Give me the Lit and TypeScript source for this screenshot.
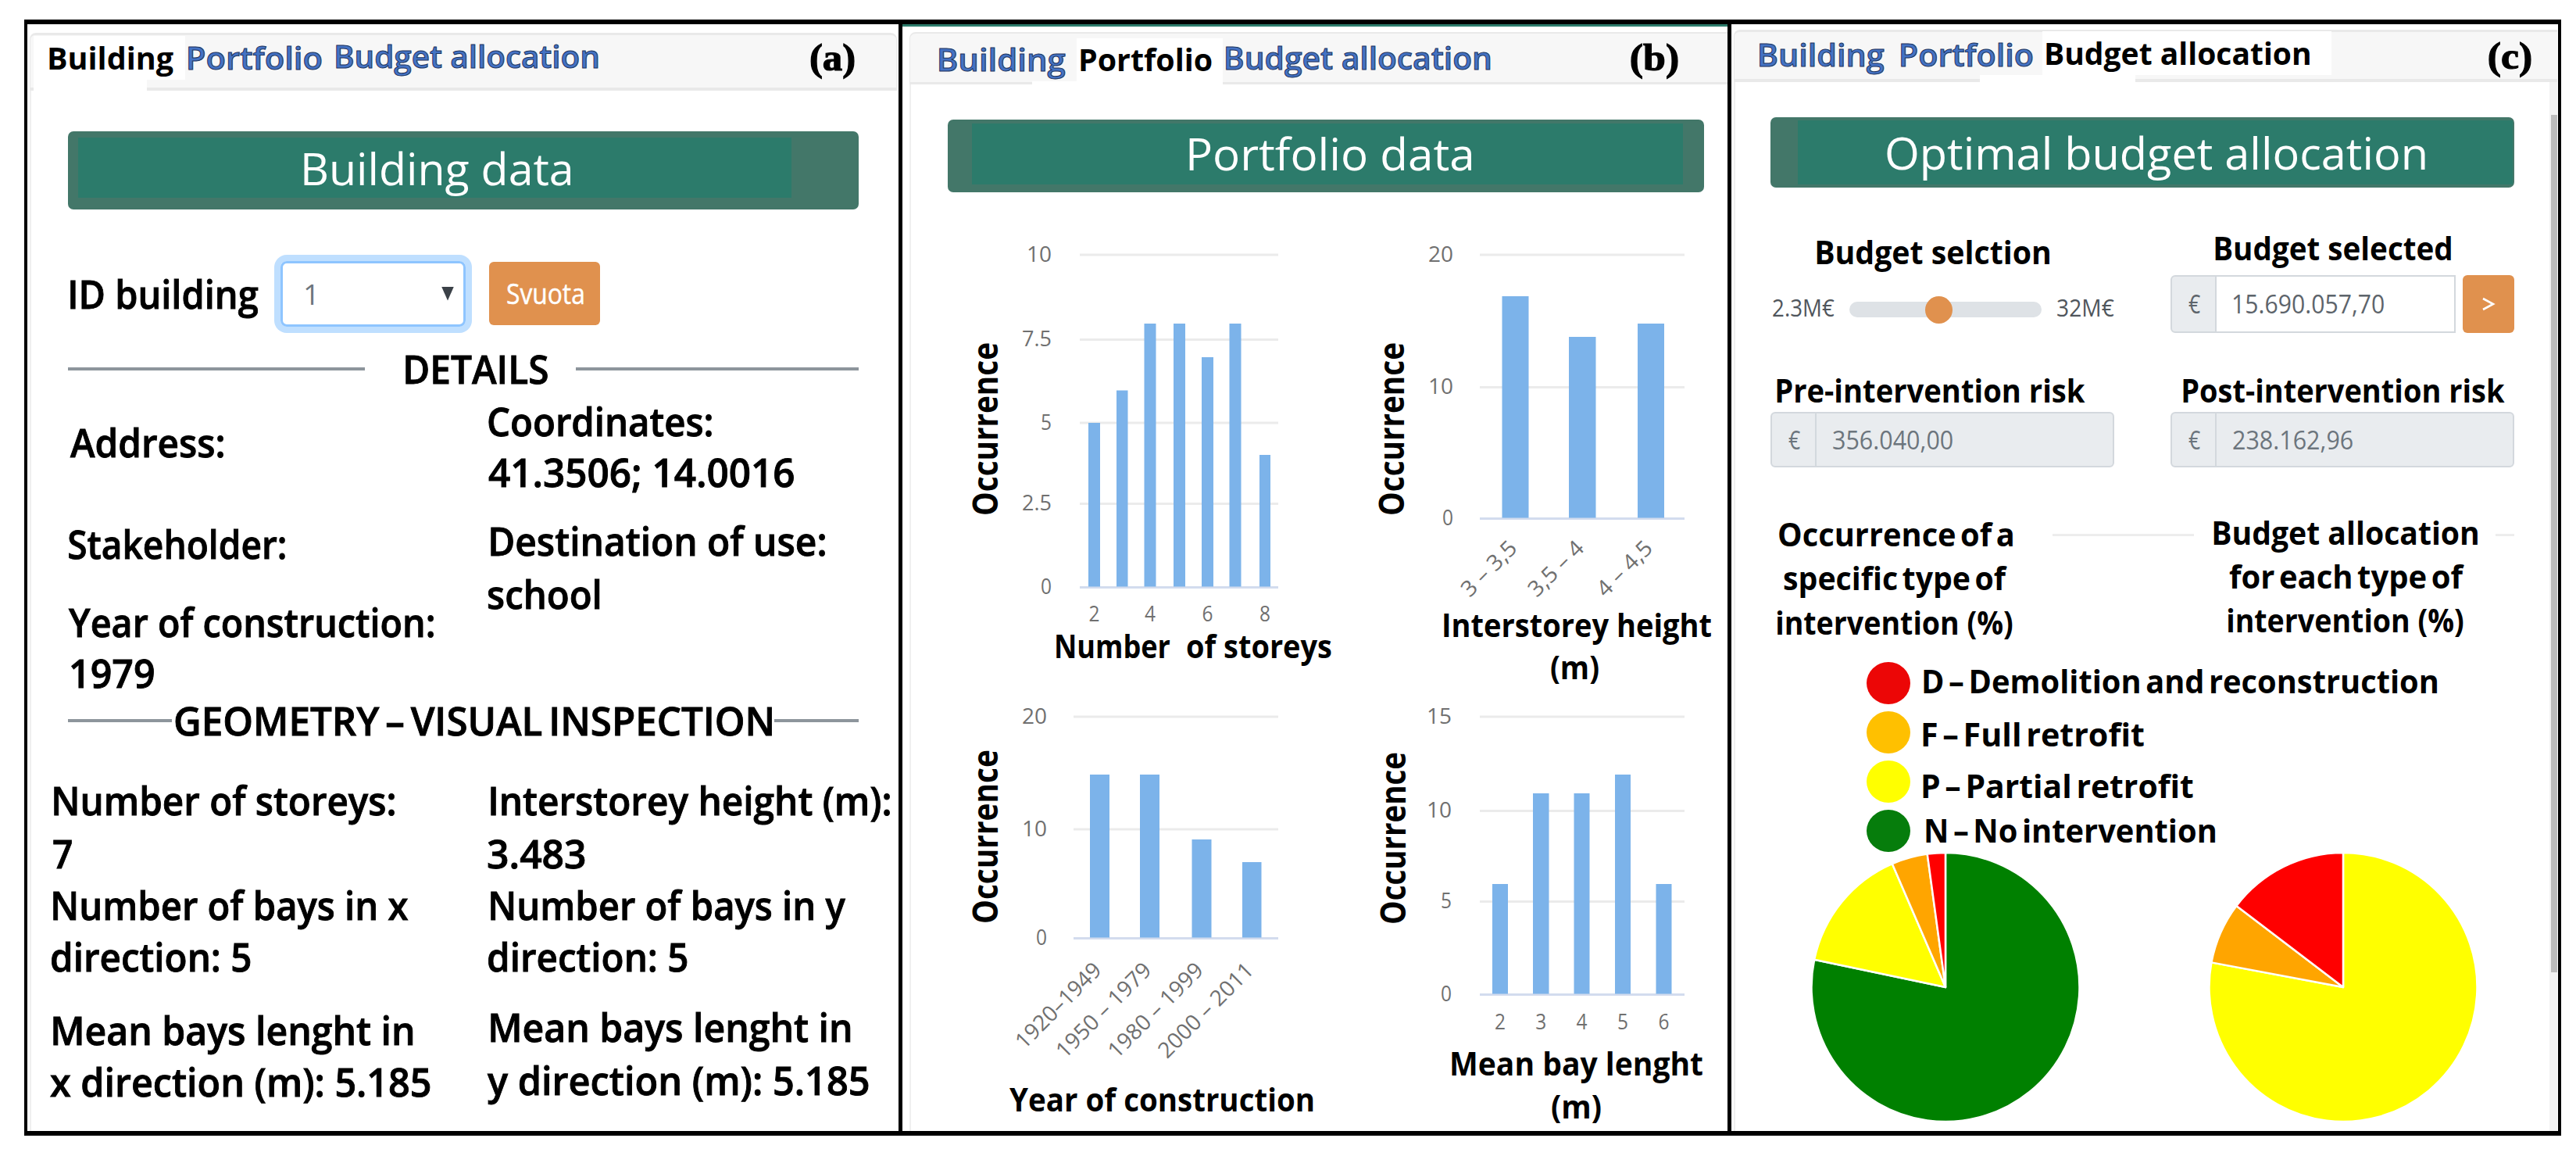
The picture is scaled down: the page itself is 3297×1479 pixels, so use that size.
import { LitElement, html, svg, css } from 'lit';
import { property, customElement, query } from 'lit/decorators.js';
import { classMap } from 'lit/directives/class-map.js';

type Tick = [string, number];
type Bar = [number, number, number];

interface ChartData {
   view: string;
   grid: [number, number];
   tickRight: number;
   ticks: Tick[];
   bars: Bar[];
   categories: string[];
   categoryY: number;
   tilted?: boolean;
   tiltedWidths?: number[];
   axis: [number, number, number];
   title: [string, number, number, number][];
}

// One line of text, stretched so that its ink is exactly `w` pixels wide
@customElement('fit-text')
export class FitText extends LitElement {
   @property({ type: String }) text = '';
   @property({ type: Number }) w = 100;
   @query('span') span: HTMLSpanElement;

   static styles = css`
   :host {
      display: block;
      flex: none;
      line-height: 1;
      white-space: nowrap;
   }
   span {
      display: inline-block;
      line-height: 1;
      vertical-align: top;
      transform-origin: 0 0;
   }
`;

   updated() {
      const style = getComputedStyle(this.span);
      const ctx = document.createElement('canvas').getContext('2d') as any;
      ctx.font = `${style.fontWeight} ${style.fontSize} ${style.fontFamily}`;
      ctx.wordSpacing = style.wordSpacing;
      const m = ctx.measureText(this.text);
      const ink = m.actualBoundingBoxLeft + m.actualBoundingBoxRight;
      const scale = (this.w - 1) / ink;
      this.style.width = `${this.w}px`;
      this.span.style.transform = `translateX(1px) scaleX(${scale}) translateX(${m.actualBoundingBoxLeft}px)`;
   }

   render() {
      return html`<span>${this.text}</span>`;
   }
}

// text, width, space above, indent
const line = (text: string, w: number, top = 0, left = 0, cls = '') => html`
   <fit-text class="${cls}" .text=${text} .w=${w} style="margin-top:${top}px;margin-left:${left}px"></fit-text>
`;

@customElement('bar-chart')
export class BarChart extends LitElement {
   @property({ attribute: false }) data: ChartData;

   static styles = css`
   :host {
      display: block;
   }
   svg {
      display: block;
      width: 100%;
      height: 100%;
      overflow: visible;
      font-family: 'Open Sans', sans-serif;
   }
   .grid {
      stroke: #ebebeb;
      stroke-width: 3;
   }
   .base {
      stroke: #d3dcee;
      stroke-width: 3;
   }
   .bar {
      fill: #7cb3ea;
   }
   .tick {
      fill: #707070;
      font-size: 28px;
   }
   .title {
      font-size: 41px;
      font-weight: 700;
   }
   .axis {
      font-size: 44px;
      font-weight: 700;
   }
`;

   render() {
      const d = this.data;
      const [x1, x2] = d.grid;
      const base = d.ticks[d.ticks.length - 1][1];
      return html`
         <svg viewBox="${d.view}">
            ${d.ticks.map(([label, y], i) => svg`
               <line class="${i === d.ticks.length - 1 ? 'base' : 'grid'}" x1=${x1} x2=${x2} y1=${y} y2=${y} />
               <text class="tick" x=${d.tickRight} y=${y + 8.5} text-anchor="end"
                  textLength=${label.length === 1 ? 14 : label.length === 2 ? 32 : 38} lengthAdjust="spacingAndGlyphs">${label}</text>
            `)}
            ${d.bars.map(([x, w, top]) => svg`
               <rect class="bar" x=${x} y=${top} width=${w} height=${base - top - 1} />
            `)}
            ${d.bars.map(([x, w], i) => {
               const label = d.categories[i];
               if (!label) return '';
               const cx = x + w / 2;
               return d.tilted
                  ? svg`<text class="tick" text-anchor="end" textLength=${d.tiltedWidths[i]} lengthAdjust="spacingAndGlyphs"
                     transform="translate(${cx + 4} ${d.categoryY}) rotate(-45)">${label}</text>`
                  : svg`<text class="tick" x=${cx} y=${d.categoryY} text-anchor="middle"
                     textLength="14" lengthAdjust="spacingAndGlyphs">${label}</text>`;
            })}
            <text class="axis" textLength=${d.axis[2]} lengthAdjust="spacingAndGlyphs"
               transform="translate(${d.axis[0]} ${d.axis[1]}) rotate(-90)">Occurrence</text>
            ${d.title.map(([text, x, y, w]) => svg`
               <text class="title" x=${x} y=${y} textLength=${w} lengthAdjust="spacingAndGlyphs">${text}</text>
            `)}
         </svg>
      `;
   }
}

@customElement('pie-chart')
export class PieChart extends LitElement {
   // [end angle in degrees, colour], clockwise from the top
   @property({ attribute: false }) slices: [number, string][] = [];

   static styles = css`
   :host {
      display: block;
      width: 342px;
      height: 344px;
   }
   svg {
      display: block;
   }
   path {
      stroke: #fff;
      stroke-width: 2.5;
      stroke-linejoin: round;
   }
`;

   private point(angle: number) {
      const a = (angle * Math.PI) / 180;
      return `${171 + 171.5 * Math.sin(a)} ${172 - 172 * Math.cos(a)}`;
   }

   render() {
      let start = 0;
      return html`
         <svg width="342" height="344" viewBox="0 0 342 344">
            ${this.slices.map(([end, color]) => {
               const to = Math.min(end, 359.99);
               const large = end - start > 180 ? 1 : 0;
               const d = `M171 172 L${this.point(start)} A171.5 172 0 ${large} 1 ${this.point(to)} Z`;
               start = end;
               return svg`<path d=${d} fill=${color} />`;
            })}
         </svg>
      `;
   }
}

const CHARTS: ChartData[] = [
   {
      view: '1213 296 533 584',
      grid: [1382, 1636],
      tickRight: 1346,
      ticks: [['10', 326], ['7.5', 434.5], ['5', 541], ['2.5', 644.5], ['0', 751.5]],
      bars: [[1393, 15, 541], [1429, 14.5, 499.5], [1464.5, 15, 414], [1502, 15, 414], [1538, 15, 457], [1573.5, 15, 414], [1612, 14, 582]],
      categories: ['2', '', '4', '', '6', '', '8'],
      categoryY: 795,
      axis: [1277, 660, 222],
      title: [['Number', 1349, 842, 149], ['of storeys', 1518, 842, 187]],
   },
   {
      view: '1746 296 465 584',
      grid: [1894, 2156],
      tickRight: 1860,
      ticks: [['20', 326], ['10', 495.5], ['0', 663.5]],
      bars: [[1922.5, 34, 379], [2008, 34.5, 431], [2096, 34, 414]],
      categories: ['3 – 3,5', '3,5 – 4', '4 – 4,5'],
      categoryY: 703,
      tilted: true,
      tiltedWidths: [88, 88, 88],
      axis: [1797, 660, 222],
      title: [['Interstorey height', 1845, 815, 346], ['(m)', 1984, 869, 63]],
   },
   {
      view: '1213 880 533 567',
      grid: [1374, 1636],
      tickRight: 1340,
      ticks: [['20', 917], ['10', 1061], ['0', 1200.5]],
      bars: [[1395, 25, 991], [1459, 25, 991], [1525.5, 25, 1074], [1590, 24.5, 1103]],
      categories: ['1920–1949', '1950 – 1979', '1980 – 1999', '2000 – 2011'],
      categoryY: 1243,
      tilted: true,
      tiltedWidths: [142, 159, 159, 159],
      axis: [1277, 1182, 223],
      title: [['Year of construction', 1292, 1422, 391]],
   },
   {
      view: '1746 880 465 567',
      grid: [1894, 2156],
      tickRight: 1858,
      ticks: [['15', 917], ['10', 1037.5], ['5', 1153.5], ['0', 1272.5]],
      bars: [[1910, 20, 1131], [1962, 20.5, 1015], [2014.5, 20, 1015], [2067, 20, 991], [2119.5, 20, 1131]],
      categories: ['2', '3', '4', '5', '6'],
      categoryY: 1317,
      axis: [1799, 1183, 221],
      title: [['Mean bay lenght', 1855, 1376, 325], ['(m)', 1985, 1431, 65]],
   },
];

const LEGEND = [
   { color: '#ec0606', text: 'D – Demolition and reconstruction', w: 658, top: -6, left: 16 },
   { color: '#ffc000', text: 'F – Full retrofit', w: 284, top: 4, left: 15 },
   { color: '#ffff00', text: 'P – Partial retrofit', w: 347, top: 10, left: 15 },
   { color: '#067d0c', text: 'N – No intervention', w: 371, top: -2, left: 19 },
];

const SHARE_BY_COUNT: [number, string][] = [[281.8, '#008000'], [336.6, '#ffff00'], [352.2, '#ffa500'], [360, '#ff0000']];
const SHARE_BY_BUDGET: [number, string][] = [[280.6, '#ffff00'], [307.2, '#ffa500'], [360, '#ff0000']];

@customElement('app-root')
export class AppRoot extends LitElement {
   static styles = css`
   :host {
      display: block;
      box-sizing: border-box;
      width: 3297px;
      height: 1479px;
      padding: 25px 0 0 31px;
      overflow: hidden;
      background-color: #fff;
      color: #000;
      font-family: 'Open Sans', sans-serif;
   }
   * {
      box-sizing: border-box;
   }
   .frame {
      display: flex;
      width: 3247px;
      height: 1428px;
      border: solid #000;
      border-width: 6px 4px;
   }
   .panel {
      display: flex;
      flex-direction: column;
      height: 100%;
   }
   .panel-a {
      width: 1115px;
      padding: 11px 2px 0 3px;
   }
   .panel-b {
      width: 1066px;
      border: solid #000;
      border-width: 0 5px;
   }
   .strip {
      height: 3px;
      background-color: #2c7b6b;
   }
   .panel-b .inner {
      flex: 1;
      display: flex;
      flex-direction: column;
      padding: 7px 0 0 9px;
   }
   .panel-c {
      width: 1058px;
      padding: 7px 1px 0 3px;
   }
   .body {
      flex: 1;
      min-height: 0;
      display: flex;
      flex-direction: column;
      border-left: 2px solid #efefef;
   }

   .tabs {
      position: relative;
      display: flex;
      align-items: flex-start;
      flex: none;
      background-color: #f7f7f7;
      border: 3px solid #e9e9e9;
      border-width: 3px 0 4px 1px;
      border-radius: 8px 0 0 0;
      font-size: 39px;
      font-weight: 600;
   }
   .panel-a .tabs {
      height: 74px;
      border-right-width: 1px;
      border-radius: 8px 8px 0 0;
   }
   .panel-b .tabs {
      height: 67px;
      border-width: 2px 0 3px 1px;
   }
   .panel-c .tabs {
      height: 67px;
   }
   .tabs fit-text {
      position: relative;
   }
   .tab {
      color: #4472c4;
      -webkit-text-stroke: 1px #1d3560;
   }
   .active {
      color: #000;
      font-weight: 700;
      -webkit-text-stroke: 0;
   }
   .patch {
      position: absolute;
      background-color: #fff;
   }
   .letter {
      font-family: 'Liberation Serif', serif;
      font-size: 48px;
      font-weight: 700;
      -webkit-text-stroke: 1.2px #000;
   }
   .push {
      margin-left: auto;
   }

   .banner {
      flex: none;
      display: flex;
      background-color: #437769;
      border-radius: 7px;
      color: #fff;
      font-size: 57px;
      font-weight: 400;
   }
   .plate {
      flex: 1;
      background-color: #2c7b6b;
   }
   .panel-a .banner {
      width: 1012px;
      height: 100px;
      margin: 52px 0 0 47px;
      padding: 8px 86px 15px 13px;
   }
   .panel-b .banner {
      width: 968px;
      height: 93px;
      margin: 45px 0 0 47px;
      padding: 5px 27px 10px 31px;
   }
   .panel-c .banner {
      width: 952px;
      height: 90px;
      margin: 45px 0 0 45px;
      padding: 4px 2px 4px 35px;
   }

   .text {
      font-size: 50px;
      line-height: 49px;
      height: 49px;
      font-weight: 600;
      -webkit-text-stroke: 0.9px #000;
   }
   .label {
      font-size: 41px;
      height: 40px;
      font-weight: 700;
   }
   .tight {
      word-spacing: -5px;
   }
   .id-row {
      display: flex;
      align-items: center;
      height: 101px;
      margin: 57px 0 0 49px;
   }
   .select {
      display: flex;
      align-items: center;
      justify-content: space-between;
      width: 237px;
      height: 84px;
      margin-left: 29px;
      padding: 0 12px 0 28px;
      border: 3px solid #8ec5ff;
      border-radius: 8px;
      box-shadow: 0 0 0 8px #bfdfff;
      font-size: 37px;
      color: #6c757d;
   }
   .caret {
      width: 16px;
      height: 18px;
      background-color: #3b4148;
      clip-path: polygon(0 0, 100% 0, 50% 100%);
   }
   .button {
      display: flex;
      align-items: center;
      justify-content: center;
      background-color: #e0914e;
      border-radius: 6px;
      color: #fff;
      font-size: 36px;
      -webkit-text-stroke: 0.5px #fff;
   }
   .clear {
      width: 142px;
      height: 81px;
      margin-left: 30px;
   }
   .rule-row {
      flex: none;
      display: flex;
      align-items: center;
      width: 1012px;
      height: 49px;
      margin-left: 47px;
   }
   .rule {
      height: 4px;
      background-color: #8d959c;
   }
   .grow {
      flex: 1;
   }
   .columns {
      flex: none;
      display: grid;
      grid-template-columns: 584px 1fr;
   }
   .details {
      height: 401px;
   }
   .charts {
      display: grid;
      grid-template-columns: 533px 465px;
      grid-template-rows: 584px 567px;
      margin: 50px 0 0 47px;
   }

   .scroll {
      flex: 1;
      min-height: 0;
      display: flex;
   }
   .bar {
      width: 10px;
      padding: 42px 0 0 2px;
      background-color: #f3f3f3;
   }
   .thumb {
      height: 1097px;
      background-color: #bdbdbd;
   }
   .pair {
      flex: none;
      display: grid;
      grid-template-columns: 440px 440px;
      column-gap: 72px;
      margin-left: 45px;
   }
   .slider {
      display: flex;
      align-items: center;
      height: 74px;
      padding-top: 14px;
      font-size: 31px;
      color: #50565c;
   }
   .slider fit-text {
      margin-bottom: 6px;
   }
   .track {
      display: flex;
      align-items: center;
      width: 247px;
      height: 20px;
      margin: 0 19px;
      padding-left: 97px;
      border-radius: 10px;
      background-color: #dee2e6;
   }
   .knob {
      width: 35px;
      height: 35px;
      border-radius: 50%;
      background-color: #e0914e;
   }
   .input-row {
      display: flex;
      justify-content: space-between;
   }
   .money {
      display: flex;
      width: 440px;
      height: 71px;
      border: 2px solid #d3d8dd;
      border-radius: 6px;
      background-color: #e9ecef;
      font-size: 32px;
      color: #6c757d;
   }
   .money.open {
      width: 365px;
      height: 74px;
      border-radius: 6px 0 0 6px;
      color: #5d646b;
   }
   .sign {
      display: flex;
      align-items: center;
      justify-content: center;
      width: 57px;
      border-right: 2px solid #d3d8dd;
   }
   .amount {
      flex: 1;
      display: flex;
      align-items: center;
      padding-left: 20px;
   }
   .open .amount {
      background-color: #fff;
   }
   .go {
      width: 66px;
      height: 74px;
   }
   .heads {
      flex: none;
      display: flex;
      height: 181px;
      margin: 63px 0 0 45px;
   }
   .heads .faint {
      height: 3px;
      margin-top: 22px;
      background-color: #ededed;
   }
   .legend-row {
      display: flex;
      align-items: center;
      height: 63px;
      margin-left: 168px;
   }
   .dot {
      width: 56px;
      height: 54px;
      border-radius: 50%;
   }
   .pies {
      display: flex;
      gap: 167px;
      margin: -3px 0 0 98px;
   }
`;

   renderBanner(text: string, w: number, top: number, left: number) {
      return html`
         <div class="banner"><div class="plate">${line(text, w, top, left)}</div></div>
      `;
   }

   renderRule(width = 0) {
      return width
         ? html`<div class="rule" style="width:${width}px"></div>`
         : html`<div class="rule grow"></div>`;
   }

   renderMoney(amount: string, w: number, open = false) {
      return html`
         <div class=${classMap({ money: true, open })}>
            <div class="sign">${line('€', 16)}</div>
            <div class="amount">${line(amount, w)}</div>
         </div>
      `;
   }

   renderBuilding() {
      return html`
         <section class="panel panel-a">
            <nav class="tabs">
               <div class="patch" style="left:4px;top:1px;width:194px;height:56px"></div>
               <div class="patch" style="left:4px;top:57px;width:145px;height:15px"></div>
               ${line('Building', 160, 9, 23, 'tab active')}
               ${line('Portfolio', 171, 9, 18, 'tab')}
               ${line('Budget allocation', 336, 7, 18, 'tab')}
               <div class="push"></div>
               ${line('(a)', 56, 5, 0, 'letter')}
               <div style="width:54px"></div>
            </nav>
            <div class="body">
               ${this.renderBanner('Building data', 343, 11, 288)}
               <div class="id-row">
                  ${line('ID building', 241, 0, 0, 'text')}
                  <div class="select">${line('1', 11)}<div class="caret"></div></div>
                  <div class="button clear">${line('Svuota', 99)}</div>
               </div>
               <div class="rule-row" style="margin-top:21px">
                  ${this.renderRule(380)}
                  ${line('DETAILS', 183, 0, 51, 'text')}
                  <div style="width:36px"></div>
                  ${this.renderRule()}
               </div>
               <div class="columns details">
                  <div>
                     ${line('Address:', 197, 45, 49, 'text')}
                     ${line('Stakeholder:', 278, 81, 47, 'text')}
                     ${line('Year of construction:', 468, 51, 47, 'text')}
                     ${line('1979', 107, 16, 50, 'text')}
                  </div>
                  <div>
                     ${line('Coordinates:', 287, 18, 0, 'text')}
                     ${line('41.3506; 14.0016', 392, 16, 0, 'text')}
                     ${line('Destination of use:', 429, 39, 3, 'text')}
                     ${line('school', 143, 19, 0, 'text')}
                  </div>
               </div>
               <div class="rule-row">
                  ${this.renderRule(133)}
                  ${line('GEOMETRY – VISUAL INSPECTION', 765, 0, 3, 'text tight')}
                  <div style="width:3px"></div>
                  ${this.renderRule()}
               </div>
               <div class="columns">
                  <div>
                     ${line('Number of storeys:', 437, 53, 28, 'text')}
                     ${line('7', 25, 19, 27, 'text')}
                     ${line('Number of bays in x', 455, 17, 27, 'text')}
                     ${line('direction: 5', 255, 17, 25, 'text')}
                     ${line('Mean bays lenght in', 461, 45, 27, 'text')}
                     ${line('x direction (m): 5.185', 487, 17, 23, 'text')}
                  </div>
                  <div>
                     ${line('Interstorey height (m):', 512, 53, 3, 'text')}
                     ${line('3.483', 125, 19, 0, 'text')}
                     ${line('Number of bays in y', 455, 17, 3, 'text')}
                     ${line('direction: 5', 255, 17, 0, 'text')}
                     ${line('Mean bays lenght in', 461, 41, 3, 'text')}
                     ${line('y direction (m): 5.185', 488, 19, -1, 'text')}
                  </div>
               </div>
            </div>
         </section>
      `;
   }

   renderPortfolio() {
      return html`
         <section class="panel panel-b">
            <div class="strip"></div>
            <div class="inner">
               <nav class="tabs">
                  <div class="patch" style="left:213px;top:6px;width:187px;height:59px"></div>
                  <div class="patch" style="left:156px;top:61px;width:161px;height:5px"></div>
                  ${line('Building', 162, 13, 36, 'tab')}
                  ${line('Portfolio', 169, 13, 19, 'tab active')}
                  ${line('Budget allocation', 339, 11, 17, 'tab')}
                  <div class="push"></div>
                  ${line('(b)', 60, 7, 0, 'letter')}
                  <div style="width:64px"></div>
               </nav>
               <div class="body">
                  ${this.renderBanner('Portfolio data', 363, 10, 277)}
                  <div class="charts">
                     ${CHARTS.map((data) => html`<bar-chart .data=${data}></bar-chart>`)}
                  </div>
               </div>
            </div>
         </section>
      `;
   }

   renderBudget() {
      return html`
         <section class="panel panel-c">
            <nav class="tabs">
               <div class="patch" style="left:394px;top:-1px;width:370px;height:56px"></div>
               <div class="patch" style="left:314px;top:55px;width:199px;height:11px"></div>
               ${line('Building', 160, 9, 31, 'tab')}
               ${line('Portfolio', 169, 9, 21, 'tab')}
               ${line('Budget allocation', 338, 7, 17, 'tab active')}
               <div class="push"></div>
               ${line('(c)', 54, 7, 0, 'letter')}
               <div style="width:34px"></div>
            </nav>
            <div class="scroll">
               <div class="body">
                  ${this.renderBanner('Optimal budget allocation', 690, 13, 113)}
                  <div class="pair" style="height:112px">
                     ${line('Budget selction', 299, 62, 58, 'label')}
                     ${line('Budget selected', 303, 57, 56, 'label')}
                  </div>
                  <div class="pair">
                     <div class="slider">
                        ${line('2.3M€', 80, 0, 2)}
                        <div class="track"><div class="knob"></div></div>
                        ${line('32M€', 74)}
                     </div>
                     <div class="input-row">
                        ${this.renderMoney('15.690.057,70', 194, true)}
                        <div class="button go">
                           <svg width="18" height="18" viewBox="0 0 18 18">
                              <path d="M2 2 L15 9 L2 16" fill="none" stroke="#fff" stroke-width="2.6" />
                           </svg>
                        </div>
                     </div>
                  </div>
                  <div class="pair" style="height:101px">
                     ${line('Pre-intervention risk', 396, 53, 7, 'label')}
                     ${line('Post-intervention risk', 413, 53, 15, 'label')}
                  </div>
                  <div class="pair">
                     ${this.renderMoney('356.040,00', 154)}
                     ${this.renderMoney('238.162,96', 154)}
                  </div>
                  <div class="heads">
                     <div style="width:361px">
                        ${line('Occurrence of a', 300, 2, 10, 'label tight')}
                        ${line('specific type of', 287, 16, 16, 'label tight')}
                        ${line('intervention (%)', 303, 17, 7, 'label')}
                     </div>
                     <div class="faint" style="width:181px"></div>
                     <div style="width:386px">
                        ${line('Budget allocation', 339, 0, 24, 'label')}
                        ${line('for each type of', 302, 16, 44, 'label tight')}
                        ${line('intervention (%)', 303, 16, 42, 'label')}
                     </div>
                     <div class="faint" style="width:24px"></div>
                  </div>
                  ${LEGEND.map((l) => html`
                     <div class="legend-row">
                        <div class="dot" style="background-color:${l.color}"></div>
                        ${line(l.text, l.w, l.top, l.left, 'label tight')}
                     </div>
                  `)}
                  <div class="pies">
                     <pie-chart .slices=${SHARE_BY_COUNT}></pie-chart>
                     <pie-chart .slices=${SHARE_BY_BUDGET}></pie-chart>
                  </div>
               </div>
               <div class="bar"><div class="thumb"></div></div>
            </div>
         </section>
      `;
   }

   render() {
      return html`
         <div class="frame">
            ${this.renderBuilding()}
            ${this.renderPortfolio()}
            ${this.renderBudget()}
         </div>
      `;
   }
}
